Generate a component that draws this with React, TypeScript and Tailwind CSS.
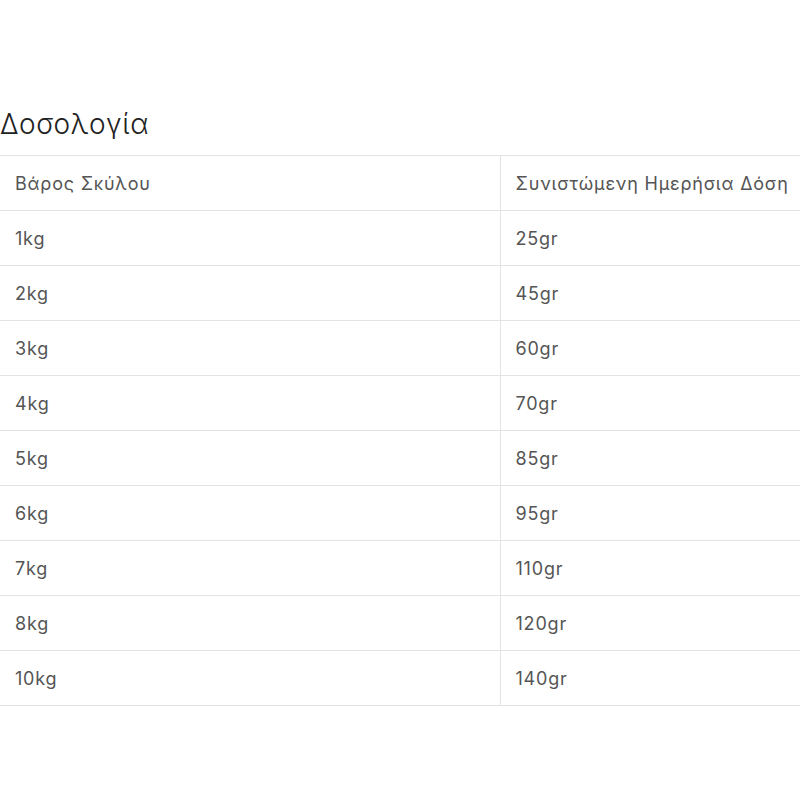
const rows: [string, string][] = [
  ["1kg", "25gr"],
  ["2kg", "45gr"],
  ["3kg", "60gr"],
  ["4kg", "70gr"],
  ["5kg", "85gr"],
  ["6kg", "95gr"],
  ["7kg", "110gr"],
  ["8kg", "120gr"],
  ["10kg", "140gr"],
];

export default function App() {
  return (
    <div className="h-[800px] w-[800px] overflow-hidden bg-white font-['Inter','Noto_Sans',sans-serif]">
      <div className="w-[1000px] pt-[104px]">
        <h2 className="mb-[11px] h-[40px] text-[28px] leading-[40px] font-light tracking-[0.6px] text-[#222]">Δοσολογία</h2>
        <table className="w-[1000px] table-fixed border-collapse text-[18px] font-normal tracking-[0.8px] text-[#555]">
          <thead>
            <tr className="h-[55px] border-y border-[#e3e3e3]">
              <th className="w-[500px] border-r border-[#e3e3e3] px-[15px] text-left font-normal">Βάρος Σκύλου</th>
              <th className="px-[15px] text-left font-normal">Συνιστώμενη Ημερήσια Δόση</th>
            </tr>
          </thead>
          <tbody>
            {rows.map(([weight, dose]) => (
              <tr key={weight} className="h-[55px] border-b border-[#e3e3e3]">
                <td className="border-r border-[#e3e3e3] px-[15px]">{weight}</td>
                <td className="px-[15px]">{dose}</td>
              </tr>
            ))}
          </tbody>
        </table>
      </div>
    </div>
  );
}
